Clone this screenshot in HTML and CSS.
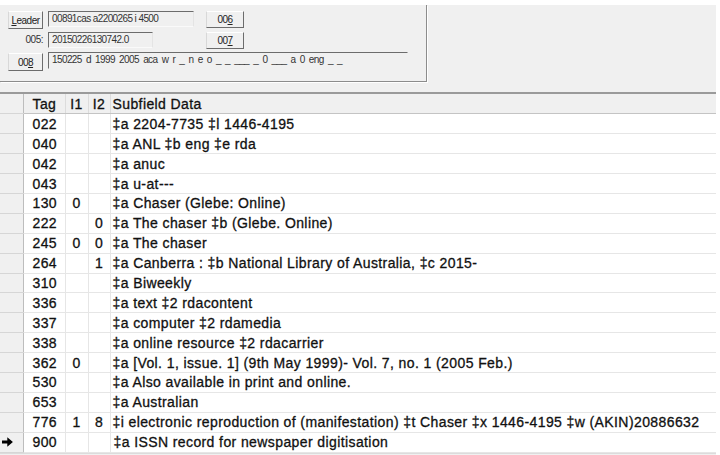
FILE: index.html
```html
<!DOCTYPE html>
<html lang="en">
<head>
    <meta charset="UTF-8">
    <meta name="viewport" content="width=device-width, initial-scale=1.0">
    <title>MARC record editor</title>
    <link rel="stylesheet" href="styles.css">
</head>
<body>
<!-- fixed fields (leader / 005 / 006 / 007 / 008) -->
<div class="panel">
    <div class="fixed-box">
        <div class="ff-row">
            <button class="btn btn-left"><u>L</u>eader</button>
            <span class="field field-leader">00891cas a2200265 i 4500</span>
            <button class="btn btn-side">00<u>6</u></button>
        </div>
        <div class="ff-row">
            <span class="ff-label">005:</span>
            <span class="field field-005">20150226130742.0</span>
            <button class="btn btn-side">00<u>7</u></button>
        </div>
        <div class="ff-row">
            <button class="btn btn-left">00<u>8</u></button>
            <span class="field field-008">150225 d 1999 2005 aca w r _ n e o _ _ ___ _ 0 ___ a 0 eng _ _</span>
        </div>
    </div>
</div>

<!-- variable fields grid -->
<table class="grid">
    <colgroup>
        <col class="c-sel">
        <col class="c-tag">
        <col class="c-ind">
        <col class="c-ind2">
        <col>
    </colgroup>
    <thead>
        <tr>
            <th class="sel"></th>
            <th class="tag">Tag</th>
            <th class="ind">I1</th>
            <th class="ind">I2</th>
            <th class="data">Subfield Data</th>
        </tr>
    </thead>
    <tbody>
        <tr><td class="sel"></td><td class="tag">022</td><td class="ind"></td><td class="ind"></td><td class="data">‡a 2204-7735 ‡l 1446-4195</td></tr>
        <tr><td class="sel"></td><td class="tag">040</td><td class="ind"></td><td class="ind"></td><td class="data">‡a ANL ‡b eng ‡e rda</td></tr>
        <tr><td class="sel"></td><td class="tag">042</td><td class="ind"></td><td class="ind"></td><td class="data">‡a anuc</td></tr>
        <tr><td class="sel"></td><td class="tag">043</td><td class="ind"></td><td class="ind"></td><td class="data">‡a u-at---</td></tr>
        <tr><td class="sel"></td><td class="tag">130</td><td class="ind">0</td><td class="ind"></td><td class="data">‡a Chaser (Glebe: Online)</td></tr>
        <tr><td class="sel"></td><td class="tag">222</td><td class="ind"></td><td class="ind">0</td><td class="data">‡a The chaser ‡b (Glebe. Online)</td></tr>
        <tr><td class="sel"></td><td class="tag">245</td><td class="ind">0</td><td class="ind">0</td><td class="data">‡a The chaser</td></tr>
        <tr><td class="sel"></td><td class="tag">264</td><td class="ind"></td><td class="ind">1</td><td class="data">‡a Canberra : ‡b National Library of Australia, ‡c 2015-</td></tr>
        <tr><td class="sel"></td><td class="tag">310</td><td class="ind"></td><td class="ind"></td><td class="data">‡a Biweekly</td></tr>
        <tr><td class="sel"></td><td class="tag">336</td><td class="ind"></td><td class="ind"></td><td class="data">‡a text ‡2 rdacontent</td></tr>
        <tr><td class="sel"></td><td class="tag">337</td><td class="ind"></td><td class="ind"></td><td class="data">‡a computer ‡2 rdamedia</td></tr>
        <tr><td class="sel"></td><td class="tag">338</td><td class="ind"></td><td class="ind"></td><td class="data">‡a online resource ‡2 rdacarrier</td></tr>
        <tr><td class="sel"></td><td class="tag">362</td><td class="ind">0</td><td class="ind"></td><td class="data">‡a [Vol. 1, issue. 1] (9th May 1999)- Vol. 7, no. 1 (2005 Feb.)</td></tr>
        <tr><td class="sel"></td><td class="tag">530</td><td class="ind"></td><td class="ind"></td><td class="data">‡a Also available in print and online.</td></tr>
        <tr><td class="sel"></td><td class="tag">653</td><td class="ind"></td><td class="ind"></td><td class="data">‡a Australian</td></tr>
        <tr><td class="sel"></td><td class="tag">776</td><td class="ind">1</td><td class="ind">8</td><td class="data">‡i electronic reproduction of (manifestation) ‡t Chaser ‡x 1446-4195 ‡w (AKIN)20886632</td></tr>
        <tr class="current">
            <td class="sel">
                <svg class="arrow" width="11" height="10" viewBox="0 0 11 10"><path d="M0 3.4H5.3V0.3L10.9 5L5.3 9.7V6.6H0Z" fill="#000"/></svg>
            </td>
            <td class="tag">900</td><td class="ind"></td><td class="ind"></td><td class="data data-edit">‡a ISSN record for newspaper digitisation</td>
        </tr>
    </tbody>
</table>
<div class="grid-foot"></div>
</body>
</html>
```

FILE: styles.css
```css
*{
    box-sizing: border-box;
    margin:0;
    padding:0;
}
body{
    background: #fff;
    font-family: "Liberation Sans", Arial, sans-serif;
    color: #111;
    width: 720px;
    height: 455px;
    overflow: hidden;
}

/* top panel */
.panel{
    margin-top: 5px;
    width: 716px;
    height: 89px;
    background: #f0f0f0;
    border-bottom: 2px solid #9a9a9a;
}
.fixed-box{
    width: 427px;
    height: 77px;
    border-right: 1px solid #8c8c8c;
    border-bottom: 1px solid #8c8c8c;
    box-shadow: 1px 1px 0 #fff;
    padding: 6px 0 0 8px;
    display: flex;
    flex-direction: column;
    gap: 3px;
}
.ff-row{
    display: flex;
    align-items: flex-start;
    height: 18px;
}
.btn{
    font-family: "Liberation Sans", Arial, sans-serif;
    font-size: 10px;
    letter-spacing: -0.5px;
    color: #222;
    background: #f0f0f0;
    border: 1px solid;
    border-color: #fff #6c6c6c #6c6c6c #d8d8d8;
    height: 18px;
    line-height: 15px;
    text-align: center;
}
.btn-left{
    width: 35px;
    margin-right: 5px;
}
.btn-side{
    width: 38px;
    height: 17px;
}
.ff-label{
    width: 40px;
    padding-right: 5px;
    text-align: right;
    font-size: 10px;
    letter-spacing: -0.5px;
    line-height: 15px;
    color: #333;
}
.field{
    font-size: 10px;
    letter-spacing: -0.6px;
    color: #333;
    height: 16px;
    line-height: 14px;
    padding-left: 3px;
    border-top: 1px solid #6c6c6c;
    border-left: 1px solid #6c6c6c;
    border-right: 1px solid #e4e4e4;
    border-bottom: 1px solid #fafafa;
    white-space: pre;
    overflow: hidden;
}
.field-leader{
    width: 146px;
    margin-right: 12px;
}
.field-005{
    width: 105px;
    margin-right: 53px;
}
.field-008{
    width: 360px;
    height: 17px;
    margin-top: -1px;
    word-spacing: 2px;
    border-right-color: #f0f0f0;
    border-bottom-color: #f0f0f0;
}

/* variable field grid */
.grid{
    width: 716px;
    border-collapse: collapse;
    table-layout: fixed;
    font-size: 14px;
    letter-spacing: 0.4px;
    color: #111;
    -webkit-text-stroke: 0.3px #111;
}
.c-sel{ width: 23px; }
.c-tag{ width: 42px; }
.c-ind{ width: 23px; }
.c-ind2{ width: 22px; }
.grid th,
.grid td{
    height: 19.9px;
    padding: 0;
    font-weight: normal;
    line-height: 16px;
    border: 1px solid #e6e6e6;
    white-space: nowrap;
    overflow: hidden;
    text-align: left;
}
.grid thead th{
    background: #f0f0f0;
    border-color: #dcdcdc;
    border-bottom-color: #c4c4c4;
    border-top: none;
}
.grid .sel{
    background: #f0f0f0;
    border-color: #d6d6d6;
    border-right-color: #bdbdbd;
    border-left: none;
}
.grid .tag{
    padding-left: 9px;
}
.grid .ind{
    text-align: center;
}
.grid .data{
    padding-left: 2px;
    border-right: none;
}
.grid .data-edit{
    padding-left: 3px;
}
.arrow{
    display: block;
    margin-left: 2px;
}
.grid-foot{
    width: 716px;
    height: 6px;
    background: #f0f0f0;
    border-top: 1px solid #dcdcdc;
}
```
